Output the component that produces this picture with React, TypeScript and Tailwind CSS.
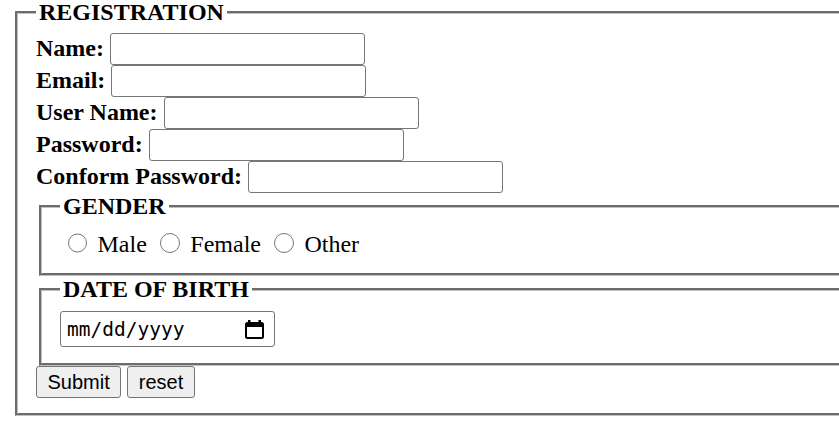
const fields = [
  { label: "Name:", type: "text" },
  { label: "Email:", type: "email" },
  { label: "User Name:", type: "text" },
  { label: "Password:", type: "password" },
  { label: "Conform Password:", type: "password" },
];

const genders = ["Male", "Female", "Other"];

function CalendarIcon() {
  return (
    <svg viewBox="0 0 19 19" width="19" height="19" aria-hidden>
      <rect x="3" y="0" width="2.5" height="4" fill="#000" />
      <rect x="13.5" y="0" width="2.5" height="4" fill="#000" />
      <rect x="1" y="3" width="17" height="15" rx="1.5" fill="none" stroke="#000" strokeWidth="2" />
      <rect x="1" y="3" width="17" height="4" fill="#000" />
    </svg>
  );
}

export default function App() {
  return (
    <div className="min-h-screen overflow-hidden bg-white font-['Liberation_Serif','Times_New_Roman',serif] text-[24px] text-black">
      <form onSubmit={(e) => e.preventDefault()}>
        {/* outer box runs past the right edge, as in the shot */}
        <fieldset className="ml-[15px] w-[900px] border-[3px] border-[#c0c0c0] px-[18px] pt-[8.8px] pb-[15px] [border-style:groove]">
          <legend className="px-[3px] font-bold leading-[24px]">REGISTRATION</legend>

          {fields.map((f) => (
            <div key={f.label} className="flex h-8 items-center gap-[6px]">
              <b className="font-bold leading-[27.6px]">{f.label}</b>
              <input
                type={f.type}
                className="h-8 w-[255px] rounded-[3px] border border-[#767676] bg-white px-[4px] font-['Liberation_Sans',Arial,sans-serif] text-[20px] outline-none"
              />
            </div>
          ))}

          {/* gender */}
          <fieldset className="mx-[3px] border-[3px] border-[#c0c0c0] px-[18px] pt-[8.4px] pb-[14px] [border-style:groove]">
            <legend className="px-[3px] font-bold leading-[27.6px]">GENDER</legend>
            <div className="flex h-[30px] items-end">
              {genders.map((g) => (
                <label key={g} className="flex items-end">
                  <input type="radio" name="gender" value={g} className="mb-[6px] ml-[7.5px] mr-[4.5px] size-[19.5px]" />
                  <span className="pl-[6px] leading-[27.6px]">{g}</span>
                  <span className="w-[6px]" />
                </label>
              ))}
            </div>
          </fieldset>

          {/* date of birth */}
          <fieldset className="mx-[3px] border-[3px] border-[#c0c0c0] px-[18px] pt-[8px] pb-[16px] [border-style:groove]">
            <legend className="px-[3px] font-bold leading-[27.6px]">DATE OF BIRTH</legend>
            <div className="flex h-9 w-[215px] items-center justify-between rounded-[3px] border border-[#767676] bg-white pl-[6px] pr-[10px]">
              <span className="font-['DejaVu_Sans_Mono',monospace] text-[19.5px] leading-none">mm/dd/yyyy</span>
              <CalendarIcon />
            </div>
          </fieldset>

          <div className="flex h-8 gap-[6px]">
            <button
              type="submit"
              className="h-8 rounded-[3px] border border-[#767676] bg-[#efefef] px-[10.5px] font-['Liberation_Sans',Arial,sans-serif] text-[20px] leading-[23px] text-black"
            >
              Submit
            </button>
            <button
              type="reset"
              className="h-8 rounded-[3px] border border-[#767676] bg-[#efefef] px-[10.5px] font-['Liberation_Sans',Arial,sans-serif] text-[20px] leading-[23px] text-black"
            >
              reset
            </button>
          </div>
        </fieldset>
      </form>
    </div>
  );
}
